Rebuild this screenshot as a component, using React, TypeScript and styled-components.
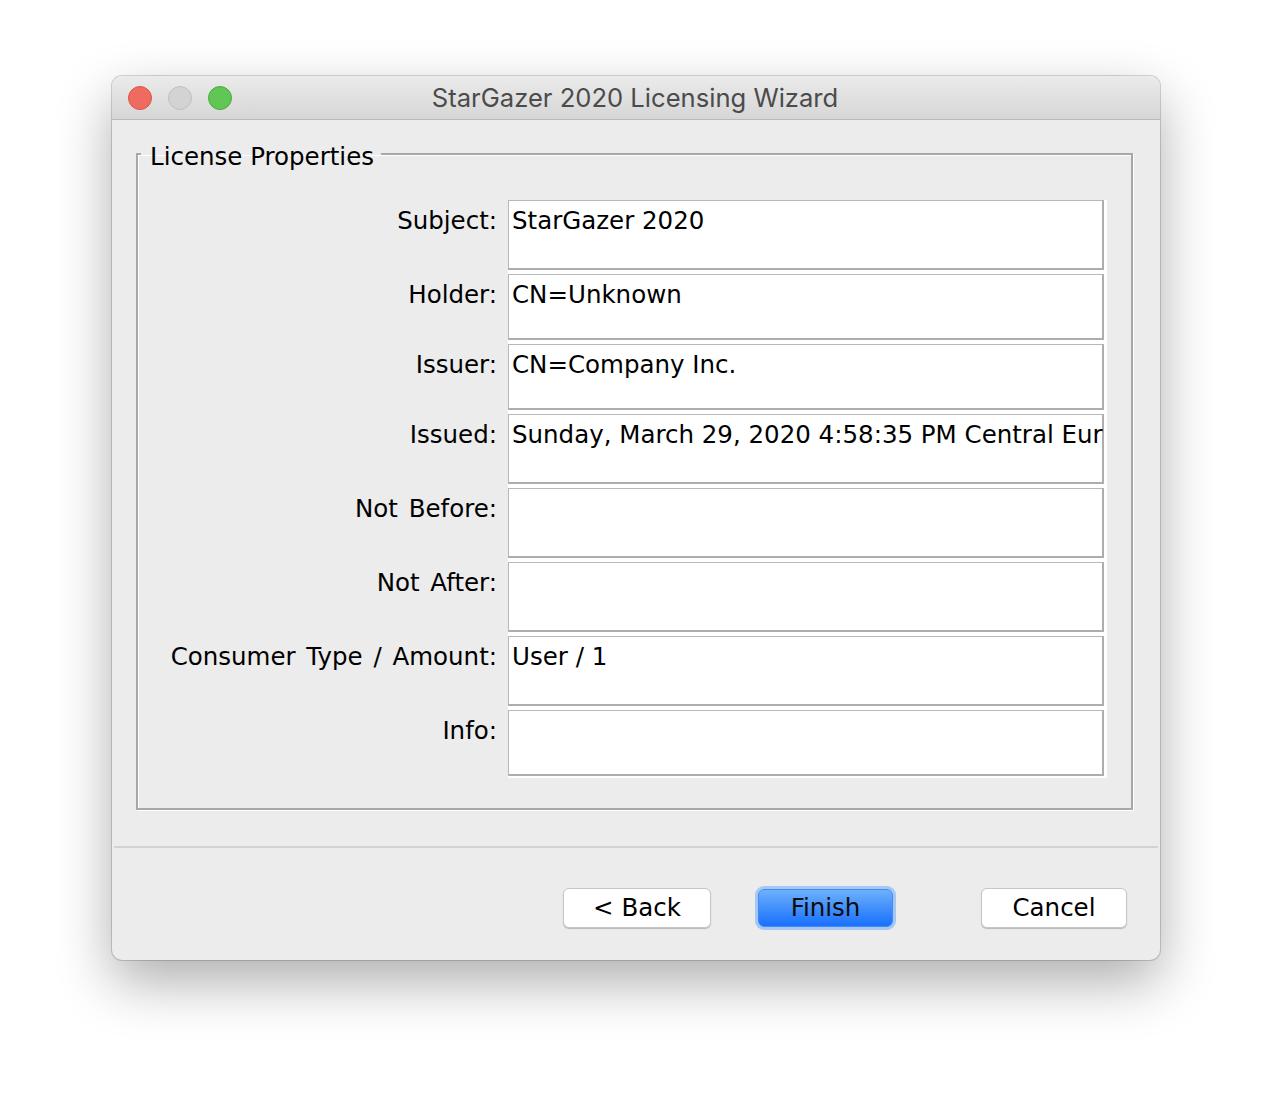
import React from 'react';
import styled, { createGlobalStyle } from 'styled-components';

const GlobalStyle = createGlobalStyle`
  html, body {
    margin: 0;
    padding: 0;
    background: #ffffff;
  }
  * {
    box-sizing: border-box;
  }
`;

const UI_FONT = `"DejaVu Sans", "Liberation Sans", sans-serif`;

const Page = styled.div`
  width: 1272px;
  height: 1108px;
  padding: 76px 0 0 112px;
  font-family: ${UI_FONT};
`;

const Window = styled.div`
  width: 1048px;
  height: 884px;
  border-radius: 10px;
  background: #ececec;
  overflow: hidden;
  display: flex;
  flex-direction: column;
  box-shadow: 0 22px 55px rgba(0, 0, 0, 0.32), 0 0 0 1px rgba(0, 0, 0, 0.16);
`;

const TitleBar = styled.div`
  height: 44px;
  flex: none;
  display: grid;
  grid-template-columns: 1fr auto 1fr;
  align-items: center;
  padding: 0 16px;
  background: linear-gradient(#ebebeb, #d6d6d6);
  border-bottom: 1px solid #b9b9b9;
`;

const Lights = styled.div`
  display: flex;
  gap: 16px;
`;

const Light = styled.span<{ $fill: string; $edge: string }>`
  width: 24px;
  height: 24px;
  border-radius: 50%;
  background: ${({ $fill }) => $fill};
  border: 1px solid ${({ $edge }) => $edge};
`;

const Title = styled.div`
  font-family: Inter, "Open Sans", sans-serif;
  font-size: 25.6px;
  color: #4b4b4b;
  white-space: nowrap;
  margin-left: -2px;
`;

const Body = styled.div`
  display: flex;
  flex-direction: column;
  padding: 16px 27px 0 24px;
`;

const Group = styled.fieldset`
  margin: 0;
  padding: 28px 24px 30px 0;
  border: 2px solid #a8a8a8;
  box-shadow: 1px 1px 0 #ffffff, inset 1px 1px 0 #ffffff;
`;

const Legend = styled.legend`
  margin-left: 3px;
  padding: 6px 7px 0 9px;
  font-size: 24.5px;
  line-height: 30px;
  color: #000;
`;

const Form = styled.div`
  display: grid;
  grid-template-columns: 359px 1fr;
  column-gap: 11px;
`;

const Label = styled.div`
  text-align: right;
  padding-top: 6px;
  font-size: 24.5px;
  line-height: 30px;
  word-spacing: 3px;
  color: #000;
  white-space: nowrap;
`;

const FieldCell = styled.div<{ $last?: boolean }>`
  background: #ffffff;
  overflow: hidden;
  padding: 0 3px ${({ $last }) => ($last ? '2px' : '4px')} 0;
`;

const Field = styled.div<{ $h: number }>`
  height: ${({ $h }) => $h}px;
  border-top: 1px solid #b8b8b8;
  border-left: 1px solid #b8b8b8;
  border-right: 2px solid #adadad;
  border-bottom: 2px solid #adadad;
  padding: 5px 0 0 3px;
  font-size: 24.5px;
  line-height: 30px;
  color: #000;
  white-space: nowrap;
`;

const Separator = styled.div`
  height: 2px;
  margin: 36px 2px 0;
  background: #d2d2d2;
`;

const ButtonRow = styled.div`
  display: flex;
  justify-content: flex-end;
  align-items: center;
  padding: 40px 33px 0 0;
`;

const Button = styled.button<{ $primary?: boolean; $w: number; $gap?: number }>`
  width: ${({ $w }) => $w}px;
  height: ${({ $primary }) => ($primary ? 38 : 40)}px;
  margin-left: ${({ $gap }) => $gap ?? 0}px;
  border-radius: 6px;
  font-family: ${UI_FONT};
  font-size: 24.5px;
  line-height: 30px;
  padding: 0;
  color: ${({ $primary }) => ($primary ? '#0d0d0d' : '#000')};
  border: 1px solid ${({ $primary }) => ($primary ? '#3f8cf5' : '#c6c6c6')};
  background: ${({ $primary }) =>
    $primary ? 'linear-gradient(#6db0fb, #1870fd)' : '#ffffff'};
  box-shadow: ${({ $primary }) =>
    $primary
      ? '0 0 0 3px rgba(110, 170, 250, 0.55)'
      : '0 1px 1px rgba(0, 0, 0, 0.22)'};
`;

const rows = [
  { label: 'Subject:', value: 'StarGazer 2020', h: 70 },
  { label: 'Holder:', value: 'CN=Unknown', h: 66 },
  { label: 'Issuer:', value: 'CN=Company Inc.', h: 66 },
  { label: 'Issued:', value: 'Sunday, March 29, 2020 4:58:35 PM Central Eur', h: 70 },
  { label: 'Not Before:', value: '', h: 70 },
  { label: 'Not After:', value: '', h: 70 },
  { label: 'Consumer Type / Amount:', value: 'User / 1', h: 70 },
  { label: 'Info:', value: '', h: 66 },
];

const App: React.FC = () => (
  <Page>
    <GlobalStyle />
    <Window>
      <TitleBar>
        <Lights>
          <Light $fill="#ef6b60" $edge="#d9564b" />
          <Light $fill="#d3d3d3" $edge="#bfbfbf" />
          <Light $fill="#60c654" $edge="#4fa941" />
        </Lights>
        <Title>StarGazer 2020 Licensing Wizard</Title>
        <span />
      </TitleBar>

      <Body>
        <Group>
          <Legend>License Properties</Legend>
          <Form>
            {rows.map((r, i) => (
              <React.Fragment key={r.label}>
                <Label>{r.label}</Label>
                <FieldCell $last={i === rows.length - 1}>
                  <Field $h={r.h}>{r.value}</Field>
                </FieldCell>
              </React.Fragment>
            ))}
          </Form>
        </Group>
      </Body>

      <Separator />
      <ButtonRow>
        <Button $w={148}>&lt; Back</Button>
        <Button $primary $w={135} $gap={47}>Finish</Button>
        <Button $w={146} $gap={88}>Cancel</Button>
      </ButtonRow>
    </Window>
  </Page>
);

export default App;
